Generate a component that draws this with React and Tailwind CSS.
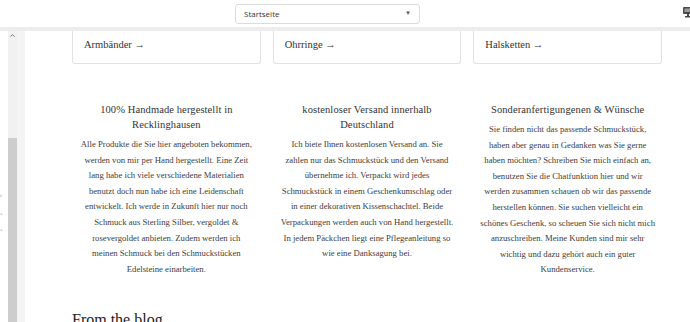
import { ChevronUp } from 'lucide-react';

const cards = ['Armbänder', 'Ohrringe', 'Halsketten'];

const features = [
  {
    title: ['100% Handmade hergestellt in', 'Recklinghausen'],
    lines: [
      'Alle Produkte die Sie hier angeboten bekommen,',
      'werden von mir per Hand hergestellt. Eine Zeit',
      'lang habe ich viele verschiedene Materialien',
      'benutzt doch nun habe ich eine Leidenschaft',
      'entwickelt. Ich werde in Zukunft hier nur noch',
      'Schmuck aus Sterling Silber, vergoldet &',
      'rosevergoldet anbieten. Zudem werden ich',
      'meinen Schmuck bei den Schmuckstücken',
      'Edelsteine einarbeiten.',
    ],
  },
  {
    title: ['kostenloser Versand innerhalb', 'Deutschland'],
    lines: [
      'Ich biete Ihnen kostenlosen Versand an. Sie',
      'zahlen nur das Schmuckstück und den Versand',
      'übernehme ich. Verpackt wird jedes',
      'Schmuckstück in einem Geschenkumschlag oder',
      'in einer dekorativen Kissenschachtel. Beide',
      'Verpackungen werden auch von Hand hergestellt.',
      'In jedem Päckchen liegt eine Pflegeanleitung so',
      'wie eine Danksagung bei.',
    ],
  },
  {
    title: ['Sonderanfertigungenen & Wünsche'],
    lines: [
      'Sie finden nicht das passende Schmuckstück,',
      'haben aber genau in Gedanken was Sie gerne',
      'haben möchten? Schreiben Sie mich einfach an,',
      'benutzen Sie die Chatfunktion hier und wir',
      'werden zusammen schauen ob wir das passende',
      'herstellen können. Sie suchen vielleicht ein',
      'schönes Geschenk, so scheuen Sie sich nicht mich',
      'anzuschreiben. Meine Kunden sind mir sehr',
      'wichtig und dazu gehört auch ein guter',
      'Kundenservice.',
    ],
  },
];

export default function App() {
  return (
    <div className="w-[690px] h-[322px] overflow-hidden bg-white flex flex-col relative">
      {/* editor top bar */}
      <div className="h-[27px] shrink-0 flex items-center relative">
        <div className="ml-[235px] w-[185px] h-[20px] border border-[#dcdcdc] rounded-[3px] flex items-center justify-between px-[8px] font-['Open_Sans',sans-serif] text-[8px] text-[#333]">
          <span>Startseite</span>
          <span className="text-[6px] text-[#555]">▼</span>
        </div>
        <svg className="absolute right-[-3px] top-[7px]" width="10" height="11" viewBox="0 0 10 11">
          <rect x="0" y="0" width="10" height="7" rx="1" fill="#4a4a4a" />
          <rect x="1.5" y="1.5" width="7" height="3.5" fill="#9a9a9a" />
          <rect x="4" y="7" width="2" height="2" fill="#4a4a4a" />
          <rect x="2" y="9" width="6" height="1.5" fill="#4a4a4a" />
        </svg>
      </div>
      <div className="h-[4px] shrink-0 bg-[#ececec]" />

      <div className="flex flex-1 min-h-0">
        <div className="w-[8px] shrink-0 flex flex-col pt-[165px] gap-[12px] text-[#777] text-[7px] leading-[4px] font-['DejaVu_Sans',sans-serif]">
          <span>'</span>
          <span>-</span>
          <span>-</span>
        </div>
        <div className="w-[9px] shrink-0 bg-[#f1f1f1] flex flex-col">
          <div className="h-[107px] flex justify-center pt-[1px]">
            <ChevronUp className="w-[7px] h-[7px] text-[#666]" strokeWidth={3} />
          </div>
          <div className="flex-1 bg-[#cdcdcd]" />
        </div>
        <div className="w-[8px] shrink-0 bg-[#f4f4f4]" />

        <div className="flex-1 pl-[47px] pr-[3px] font-['Liberation_Serif',serif]">
          <div className="w-[590px] grid grid-cols-3 gap-[12px]">
            {cards.map((c) => (
              <div key={c} className="h-[33px] border border-t-0 border-[#e2e2e2] rounded-b-[3px] pl-[11px] pt-[6px] text-[10.5px] text-[#333]">
                {c} →
              </div>
            ))}
          </div>

          <div className="w-[590px] grid grid-cols-3 gap-[12px] mt-[38px] text-center">
            {features.map((f) => (
              <div key={f.title[0]} className="px-[4px]">
                <h3 className="text-[10.5px] leading-[15px] text-[#333] tracking-[0.1px] mb-[5px]">
                  {f.title.map((t) => (
                    <span key={t} className="block">{t}</span>
                  ))}
                </h3>
                <p className="text-[8.7px] leading-[15.6px] text-[#404040]">
                  {f.lines.map((l) => (
                    <span key={l} className="block whitespace-nowrap">{l}</span>
                  ))}
                </p>
              </div>
            ))}
          </div>

          <h2 className="mt-[32px] text-[16px] leading-[20px] text-[#222]">From the blog</h2>
        </div>
      </div>
    </div>
  );
}
